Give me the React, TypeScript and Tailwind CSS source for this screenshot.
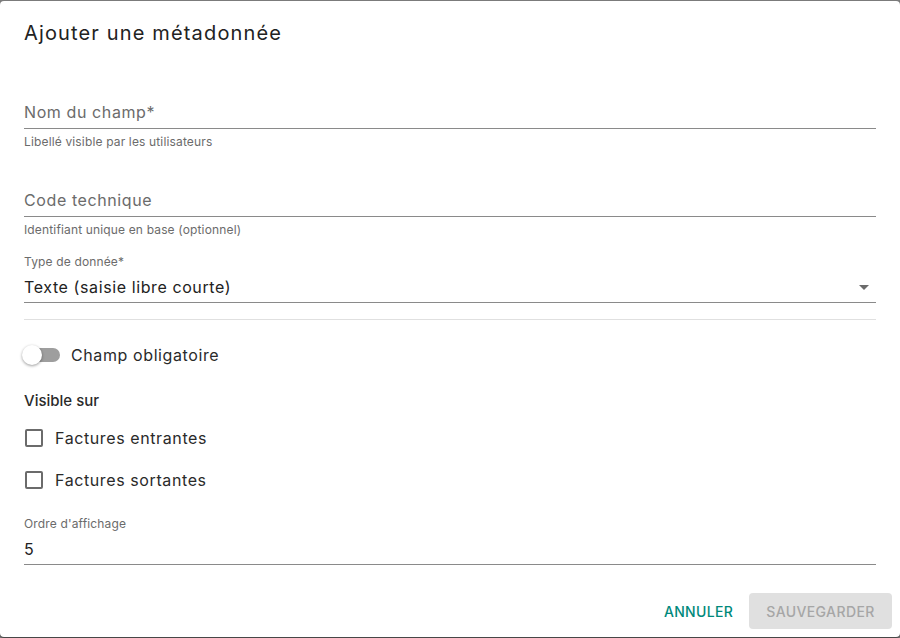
import React from "react";

const font = { fontFamily: "Inter, 'Noto Sans', sans-serif" };

function TextField({ label, helper }: { label: string; helper: string }) {
  return (
    <div className="flex flex-col">
      <div className="h-[32px] flex items-end pb-[4px] border-b border-[#8a8a8a] text-[16px] tracking-[0.6px] text-[#6b6b6b]">
        <span>{label}</span>
      </div>
      <div className="mt-[5px] text-[12px] leading-[16px] tracking-[0.15px] text-[#6b6b6b]">{helper}</div>
    </div>
  );
}

function Check({ label }: { label: string }) {
  return (
    <div className="flex items-center h-[42px]">
      <div className="w-[18px] h-[18px] ml-[25px] border-2 border-[#6b6b6b] rounded-[2px]" />
      <span className="ml-[12px] text-[16px] tracking-[0.6px] text-[#2a2a2a]">{label}</span>
    </div>
  );
}

export default function App() {
  return (
    <div className="w-[900px] h-[638px] bg-[#7f7f7f] pt-[1px]" style={font}>
      <div className="w-[900px] h-[636px] bg-white rounded-[4px] shadow-[0_1px_2px_rgba(0,0,0,0.6)] flex flex-col px-[24px]">
        <div className="h-[64px] flex items-center text-[20px] tracking-[1.15px] text-[#222] font-normal">Ajouter une métadonnée</div>
        <div className="mt-[32px]">
          <TextField label="Nom du champ*" helper="Libellé visible par les utilisateurs" />
        </div>
        <div className="mt-[35px]">
          <TextField label="Code technique" helper="Identifiant unique en base (optionnel)" />
        </div>
        <div className="mt-[16px] flex flex-col">
          <div className="text-[12px] leading-[16px] tracking-[0.15px] text-[#6b6b6b]">Type de donnée*</div>
          <div className="h-[33px] flex items-center justify-between border-b border-[#8a8a8a] pt-[1px]">
            <span className="text-[16px] tracking-[0.6px] text-[#222]">Texte (saisie libre courte)</span>
            <svg width="24" height="24" viewBox="0 0 24 24">
              <path d="M7 10l5 5 5-5z" fill="#6b6b6b" />
            </svg>
          </div>
        </div>
        <div className="mt-[16px] h-px bg-[#e0e0e0]" />
        <div className="mt-[23px] flex items-center h-[24px]">
          <div className="relative w-[38px] h-[20px] ml-[-2px]">
            <div className="absolute left-[4px] top-[3px] w-[34px] h-[14px] rounded-full bg-[#9e9e9e]" />
            <div className="absolute left-0 top-0 w-[20px] h-[20px] rounded-full bg-white shadow-[0_1px_3px_rgba(0,0,0,0.4)]" />
          </div>
          <span className="ml-[11px] text-[16px] tracking-[0.6px] text-[#2a2a2a]">Champ obligatoire</span>
        </div>
        <div className="mt-[23px] text-[15px] font-medium text-[#2a2a2a]">Visible sur</div>
        <div className="mt-[4px] flex flex-col -ml-[24px]">
          <Check label="Factures entrantes" />
          <Check label="Factures sortantes" />
        </div>
        <div className="mt-[15px] flex flex-col">
          <div className="text-[12px] leading-[16px] tracking-[0.15px] text-[#6b6b6b]">Ordre d'affichage</div>
          <div className="h-[33px] flex items-center border-b border-[#8a8a8a] pt-[2px] text-[16px] text-[#222]">5</div>
        </div>
        <div className="mt-auto mb-[8px] flex justify-end items-center gap-[16px] -mr-[16px]">
          <span className="text-[14px] font-medium text-[#00897b] tracking-[0.3px]">ANNULER</span>
          <div className="w-[143px] h-[36px] rounded-[4px] bg-[#e0e0e0] flex items-center justify-center text-[14px] font-medium text-[#a6a6a6] tracking-[0.4px]">
            SAUVEGARDER
          </div>
        </div>
      </div>
    </div>
  );
}
